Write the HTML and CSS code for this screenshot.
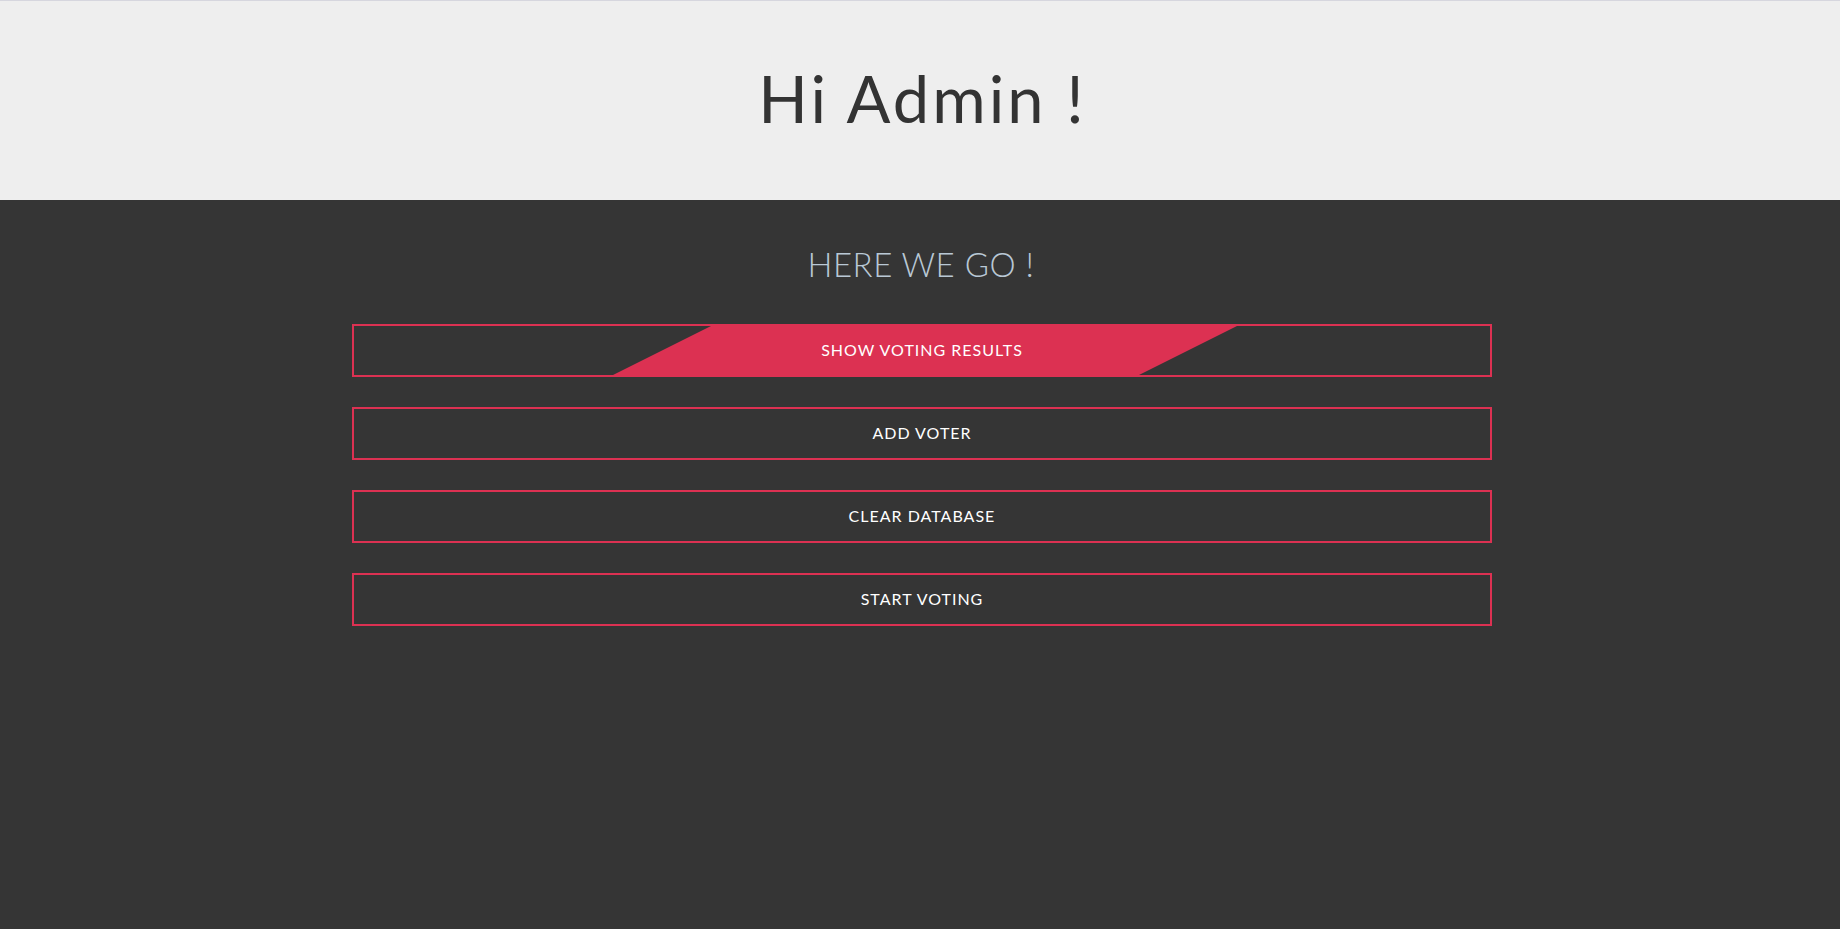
FILE: index.html
```html
<!DOCTYPE html>
<html lang="en">
<head>
<meta charset="utf-8">
<title>Admin</title>
<link rel="stylesheet" href="styles.css">
</head>
<body>
  <header class="hero">
    <h1 class="hero-title">Hi Admin !</h1>
  </header>
  <main class="panel">
    <h2 class="panel-title">HERE WE GO !</h2>
    <div class="actions">
      <button class="action is-active"><span class="action-fill"></span><span class="action-label">SHOW VOTING RESULTS</span></button>
      <button class="action"><span class="action-label">ADD VOTER</span></button>
      <button class="action"><span class="action-label">CLEAR DATABASE</span></button>
      <button class="action"><span class="action-label">START VOTING</span></button>
    </div>
  </main>
</body>
</html>
```
FILE: styles.css
```css
html, body {
  margin: 0;
  padding: 0;
  height: 100%;
}
body {
  background: #353535;
  font-family: "Lato", "Open Sans", sans-serif;
  display: flex;
  flex-direction: column;
}
.hero {
  background: #eeeeee;
  border-top: 1px solid #d6d6de;
  height: 199px;
  display: flex;
  align-items: center;
  justify-content: center;
}
.hero-title {
  margin: 0 0 5px 5px;
  font-family: "Lato", sans-serif;
  font-weight: 400;
  font-size: 65px;
  color: #333333;
  letter-spacing: 3px;
}
.panel {
  flex: 1;
  padding-top: 42px;
  display: flex;
  flex-direction: column;
  align-items: center;
}
.panel-title {
  margin: 0 0 38px 2px;
  font-family: "Lato", sans-serif;
  font-weight: 300;
  font-size: 33px;
  line-height: 44px;
  color: #b9c8d5;
  letter-spacing: 0.5px;
}
.actions {
  width: 1140px;
  padding-left: 4px;
  display: flex;
  flex-direction: column;
  gap: 30px;
}
.action {
  position: relative;
  overflow: hidden;
  height: 53px;
  width: 100%;
  background: transparent;
  border: 2px solid #dc3152;
  color: #ffffff;
  font-family: "Lato", sans-serif;
  font-size: 16px;
  font-weight: 400;
  letter-spacing: 1px;
  padding: 0 0 2px;
  cursor: pointer;
}
.action-fill {
  position: absolute;
  top: -2px;
  bottom: -2px;
  left: 50%;
  width: 526px;
  margin-left: -260px;
  background: #dc3152;
  transform: skewX(-63.43deg);
}
.action-label {
  position: relative;
}
```
